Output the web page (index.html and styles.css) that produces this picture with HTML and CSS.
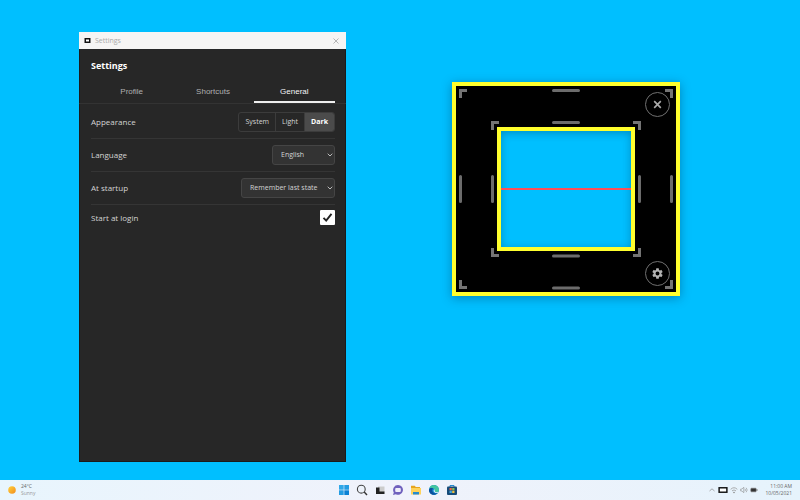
FILE: index.html
```
<!DOCTYPE html>
<html lang="en">
<head>
<meta charset="utf-8">
<title>Settings</title>
<link rel="stylesheet" href="styles.css">
</head>
<body>
<main class="desktop">
  <section class="window" aria-label="Settings">
    <header class="titlebar">
      <svg class="app-icon" viewBox="0 0 6 5" aria-hidden="true"><rect x=".75" y=".75" width="4.5" height="3.5" fill="#fff" stroke="#111" stroke-width="1.5"/></svg>
      <span class="titlebar-name">Settings</span>
      <button class="titlebar-close" aria-label="Close window"><svg viewBox="0 0 6 6"><path d="M.5.5l5 5M5.5.5l-5 5" stroke="#999" stroke-width=".7"/></svg></button>
    </header>
    <h1 class="heading">Settings</h1>
    <nav class="tabs">
      <a class="tab" href="#profile">Profile</a>
      <a class="tab" href="#shortcuts">Shortcuts</a>
      <a class="tab tab-active" href="#general">General</a>
    </nav>
    <form class="rows">
      <div class="row">
        <span>Appearance</span>
        <div class="segments">
          <button type="button" class="segment">System</button>
          <button type="button" class="segment">Light</button>
          <button type="button" class="segment segment-active">Dark</button>
        </div>
      </div>
      <div class="row">
        <label for="language">Language</label>
        <div class="picker picker-small">
          <select id="language"><option>English</option></select>
          <svg viewBox="0 0 6 4" aria-hidden="true"><path d="M.7.7L3 3 5.300.7" fill="none" stroke="#bbb"/></svg>
        </div>
      </div>
      <div class="row">
        <label for="startup">At startup</label>
        <div class="picker picker-large">
          <select id="startup"><option>Remember last state</option></select>
          <svg viewBox="0 0 6 4" aria-hidden="true"><path d="M.7.7L3 3 5.300.7" fill="none" stroke="#bbb"/></svg>
        </div>
      </div>
      <div class="row row-last">
        <label for="login">Start at login</label>
        <div class="check">
          <input id="login" type="checkbox" checked>
          <svg viewBox="0 0 15 15" aria-hidden="true"><path d="M3.500 7.800L6.200 10.600 11.500 3.800" fill="none" stroke="#222" stroke-width="1.900"/></svg>
        </div>
      </div>
    </form>
  </section>

  <section class="ruler" aria-label="Ruler">
    <svg class="marks" viewBox="0 0 228 214" aria-hidden="true">
      <g stroke="#747474" stroke-width="3" fill="none">
        <path d="M15 8.500H8.500V16M213 8.500H219.500V16M15 205.500H8.500V198M213 205.500H219.500V198" />
        <path d="M47 40.500H40.500V48M181 40.500H187.500V48M47 173.500H40.500V166M181 173.500H187.500V166" />
      </g>
      <g stroke="#6c6c6c" stroke-width="3" stroke-linecap="round">
        <path d="M101.500 8.500H126.500M101.500 40.500H126.500M101.500 174H126.500M101.500 206H126.500" />
        <path d="M8.500 94.500V119.500M40.500 94.500V119.500M187.500 94.500V119.500M219.500 94.500V119.500" />
      </g>
    </svg>
    <div class="hole"><div class="guide"></div></div>
    <button class="round round-close" aria-label="Close ruler"><svg viewBox="0 0 10 10"><path d="M2 2l6 6M8 2l-6 6" stroke="#aaa" stroke-width="1.500"/></svg></button>
    <button class="round round-gear" aria-label="Ruler settings"><svg viewBox="0 0 24 24"><path fill="#b4b4b4" d="M19.140 12.940c.04-.3.06-.61.06-.94s-.02-.64-.07-.94l2.030-1.580a.49.49 0 0 0 .12-.61l-1.920-3.320a.49.49 0 0 0-.59-.22l-2.390.96a7 7 0 0 0-1.620-.94l-.36-2.540A.48.48 0 0 0 13.920 2.400h-3.840a.48.48 0 0 0-.48.41l-.36 2.540c-.59.24-1.130.57-1.620.94l-2.390-.96a.48.48 0 0 0-.59.22L2.740 8.870a.48.48 0 0 0 .12.610l2.030 1.580a6 6 0 0 0 0 1.880l-2.030 1.580a.49.49 0 0 0-.12.610l1.920 3.320c.12.220.37.290.59.220l2.390-.96c.5.380 1.030.700 1.620.940l.36 2.540c.05.240.240.410.480.410h3.840c.24 0 .44-.17.47-.41l.36-2.540a7 7 0 0 0 1.620-.94l2.390.96c.22.080.47 0 .59-.22l1.920-3.320a.48.48 0 0 0-.12-.61zM12 15.600a3.600 3.600 0 1 1 0-7.200 3.600 3.600 0 0 1 0 7.200z"/></svg></button>
  </section>
</main>

<footer class="taskbar">
  <div class="weather">
    <svg class="sun" viewBox="0 0 8 8" aria-hidden="true"><defs><linearGradient id="sun" x2="1" y2="1"><stop stop-color="#ffd23c"/><stop offset="1" stop-color="#f28b1c"/></linearGradient></defs><circle cx="4" cy="4" r="3.800" fill="url(#sun)"/></svg>
    <div class="small-lines"><span>24°C</span><span class="faded">Sunny</span></div>
  </div>
  <div class="apps">
    <button aria-label="Start"><svg viewBox="0 0 12 12"><path fill="#31a8e8" d="M1 1h4.700v4.700H1z"/><path fill="#249ce2" d="M6.300 1H11v4.700H6.300zM1 6.300h4.700V11H1z"/><path fill="#0c82d5" d="M6.300 6.300H11V11H6.300z"/></svg></button>
    <button aria-label="Search"><svg viewBox="0 0 12 12"><circle cx="5.300" cy="5.200" r="3.900" fill="#edf2fa" stroke="#444" stroke-width="1.100"/><path d="M8.200 8.100L11 11" stroke="#333" stroke-width="1.400"/></svg></button>
    <button aria-label="Task view"><svg viewBox="0 0 12 12"><path fill="#ccc" d="M4 2.500h6.500V8H4z"/><path fill="#222" d="M2 3.500h3.500v4h5V10H2z"/></svg></button>
    <button aria-label="Chat"><svg viewBox="0 0 12 12"><path fill="#7061bd" d="M6 1a4.900 4.900 0 1 1-2.100 9.300L1 11l.8-2.600A4.900 4.900 0 0 1 6 1z"/><rect x="3.200" y="4" width="5.600" height="4" rx="1" fill="#eeeefa"/></svg></button>
    <button aria-label="Files"><svg viewBox="0 0 12 12"><path fill="#e6a51f" d="M1 1.800h3.800l1 1.200H10v3H1z"/><path fill="#ffd35c" d="M1 4h10v6.500H1z"/><path fill="#258bd0" d="M3 8h6v2.500H3z"/></svg></button>
    <button aria-label="Browser"><svg viewBox="0 0 12 12"><circle cx="6" cy="6" r="5" fill="#168bd2"/><path fill="#43c6a0" d="M1.300 4.400A5 5 0 0 1 11 6c0 1.500-1.200 2.200-2.500 2.200-2 0-1.500-1-1.500-1.700C7 4 3.500 3 1.300 4.400z"/><path fill="#0b519d" d="M1 6c.3-2 2.500-2.500 4-1.500C3 7 5 10 9.500 9.300 6 12.500 1 10.500 1 6z"/><path fill="#edf6fb" d="M6.200 5.300c1 .7.200 1.300.6 2.200.7 1 2.300 1 3.600.3L9.500 9C7 9.500 4.500 7.500 6.200 5.300z"/></svg></button>
    <button aria-label="Store"><svg viewBox="0 0 12 12"><path d="M4 3V1.500h4V3" fill="none" stroke="#258bd0"/><rect x="1" y="2.500" width="10" height="8.500" rx="1" fill="#174a78"/><path fill="#ef6946" d="M3.500 4h2.300v2.300H3.500z"/><path fill="#8fbd54" d="M6.200 4h2.300v2.300H6.200z"/><path fill="#40a8e4" d="M3.500 6.700h2.300V9H3.500z"/><path fill="#efc040" d="M6.200 6.700h2.300V9H6.200z"/></svg></button>
  </div>
  <div class="tray">
    <svg viewBox="0 0 8 8" aria-hidden="true"><path d="M1.500 5L4 2.800 6.500 5" fill="none" stroke="#888" stroke-width=".7"/></svg>
    <svg class="tray-ruler" viewBox="0 0 9 6" aria-hidden="true"><rect x="1" y="1" width="7" height="4" fill="#fff" stroke="#111" stroke-width="1.300"/></svg>
    <svg viewBox="0 0 8 8" aria-hidden="true"><g fill="none" stroke="#999" stroke-width=".8"><path d="M.7 3.300a4.800 4.800 0 0 1 6.600 0M2 4.900a2.900 2.900 0 0 1 4 0"/></g><circle cx="4" cy="6.500" r=".8" fill="#888"/></svg>
    <svg viewBox="0 0 8 8" aria-hidden="true"><path d="M.7 3h1.200L3.800 1.300v5.400L1.900 5H.7zM5 2.800q1 1.200 0 2.400M6.200 1.800q2 2.200 0 4.400" fill="none" stroke="#888" stroke-width=".6"/></svg>
    <svg viewBox="0 0 8 8" aria-hidden="true"><rect x=".8" y="2.200" width="5.400" height="3.600" rx=".7" fill="#333" stroke="#777" stroke-width=".6"/><path d="M7 3.200v1.600" stroke="#777"/></svg>
    <div class="small-lines clock"><span>11:00 AM</span><span>10/05/2021</span></div>
  </div>
</footer>
</body>
</html>
```
FILE: styles.css
```
* { box-sizing: border-box; }

body {
  margin: 0;
  min-height: 100vh;
  display: flex;
  flex-direction: column;
  background: #00bfff;
  font-family: "Open Sans", "Noto Sans", sans-serif;
  font-size: 8px;
  line-height: 12px;
}

button, select, input { font: inherit; margin: 0; }
button { padding: 0; border: 0; background: none; }
svg { display: block; flex: none; }

.desktop { flex: 1; position: relative; }

/* Settings window */
.window {
  position: absolute;
  left: 79px;
  top: 32px;
  bottom: 18px;
  width: 267px;
  background: #272727;
  color: #d4d4d4;
  box-shadow: inset 0 0 0 1px #1b1b1b;
}

.titlebar {
  display: flex;
  align-items: center;
  gap: 4px;
  height: 17px;
  padding: 0 7px 0 5px;
  background: #f6f5f4;
  color: #aaa;
  font-size: 7px;
}
.app-icon { width: 7px; height: 5px; }
.titlebar-close { margin-left: auto; }
.titlebar-close svg { width: 6px; height: 6px; }

.heading {
  margin: 0;
  padding: 10px 12px 8px;
  font-size: 9px;
  line-height: 14px;
  font-weight: 700;
  color: #fff;
}

.tabs {
  display: grid;
  grid-template-columns: repeat(3, 1fr);
  padding: 0 11px 0 12px;
  border-bottom: 1px solid #333;
  font-family: "Liberation Sans", Arial, sans-serif;
}
.tab {
  padding: 5px 0 3px;
  border-bottom: 2px solid transparent;
  color: #b0b0b0;
  text-align: center;
  text-decoration: none;
}
.tab-active { color: #f4f4f4; border-color: #eee; }

.rows { padding: 0 11px 0 12px; }
.row {
  display: flex;
  align-items: center;
  justify-content: space-between;
  padding: 6px 0;
  border-bottom: 1px solid #353535;
}
.row:first-child { padding-top: 8px; }
.row-last { padding: 5px 0; border: 0; }

.segments {
  display: flex;
  height: 20px;
  border: 1px solid #3c3c3c;
  border-radius: 3px;
  overflow: hidden;
}
.segment { padding: 0 6px; color: #d4d4d4; font-size: 7px; }
.segment + .segment { border-left: 1px solid #3c3c3c; }
.segment-active { background: #4b4b4b; color: #fff; font-weight: 700; }

.picker { position: relative; height: 20px; }
.picker-small { width: 63px; }
.picker-large { width: 94px; }
.picker select {
  appearance: none;
  width: 100%;
  height: 100%;
  padding: 0 8px;
  border: 1px solid #454545;
  border-radius: 3px;
  background: #333;
  color: #d4d4d4;
  font-size: 7px;
}
.picker svg {
  position: absolute;
  right: 2px;
  top: 8px;
  width: 6px;
  height: 4px;
  pointer-events: none;
}

.check { position: relative; width: 15px; height: 15px; }
.check input {
  appearance: none;
  display: block;
  width: 100%;
  height: 100%;
  border-radius: 1px;
  background: #fff;
}
.check svg { position: absolute; inset: 0; pointer-events: none; }

/* Floating ruler */
.ruler {
  position: absolute;
  left: 452px;
  top: 82px;
  width: 228px;
  height: 214px;
  display: flex;
  align-items: center;
  justify-content: center;
  border: 4px solid #ffff2d;
  background: #000;
  box-shadow: 0 2px 10px rgba(0, 30, 60, .35);
}
.marks { position: absolute; inset: -4px; }
.hole {
  width: 138px;
  height: 124px;
  display: flex;
  align-items: center;
  border: 4px solid #ffff2d;
  background: #00bfff;
  box-shadow: inset 0 2px 8px rgba(0, 30, 60, .3);
}
.guide { flex: 1; height: 2px; background: #ff4f57; }
.round {
  position: absolute;
  right: 6px;
  width: 25px;
  height: 25px;
  display: flex;
  align-items: center;
  justify-content: center;
  border: 1px solid #707070;
  border-radius: 50%;
  background: #000;
}
.round-close svg { width: 11px; height: 11px; }
.round-gear svg { width: 13px; height: 13px; }
.round-close { top: 6px; }
.round-gear { bottom: 6px; }

/* Taskbar */
.taskbar {
  display: grid;
  grid-template-columns: 1fr auto 1fr;
  align-items: center;
  height: 20px;
  padding: 0 8px;
  background: linear-gradient(90deg, #e8f5fd, #f0f2fb 50%, #e6f3fc);
  color: #666;
}
.weather, .apps, .tray { display: flex; align-items: center; }
.weather { gap: 5px; }
.sun { width: 8px; height: 8px; }
.small-lines {
  display: flex;
  flex-direction: column;
  font-size: 5px;
  line-height: 7px;
}
.faded { color: #999; }
.apps { gap: 6px; padding-right: 4px; }
.apps svg { width: 12px; height: 12px; }
.tray { justify-content: flex-end; gap: 2px; }
.tray svg { width: 8px; height: 8px; }
.tray .tray-ruler { width: 10px; }
.clock { min-width: 32px; text-align: right; }
```
